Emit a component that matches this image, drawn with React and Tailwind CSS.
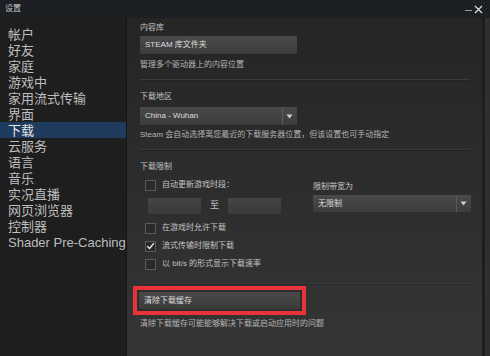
const navItems = [
  "帐户",
  "好友",
  "家庭",
  "游戏中",
  "家用流式传输",
  "界面",
  "下载",
  "云服务",
  "语言",
  "音乐",
  "实况直播",
  "网页浏览器",
  "控制器",
  "Shader Pre-Caching",
];

const font = { fontFamily: '"Liberation Sans", "Noto Sans CJK SC", sans-serif' };

function Checkbox({ checked, label }) {
  return (
    <div className="flex items-center gap-[6px] pl-[5px] h-[18px]">
      <div className="w-[11px] h-[11px] border border-[#5a5a5a] bg-[#2a2a2a] flex items-center justify-center">
        {checked && (
          <svg width="10" height="10" viewBox="0 0 10 10">
            <path d="M1.5 5.2 L4 7.8 L8.8 1.8" stroke="#e8e8e8" strokeWidth="1.6" fill="none" />
          </svg>
        )}
      </div>
      <span className="text-[8px] text-[#c4c4c4]">{label}</span>
    </div>
  );
}

function Arrow() {
  return (
    <div className="flex items-center h-full pl-[3px] border-l border-[#5a5a5a] my-[2px]">
      <svg width="7" height="5" viewBox="0 0 7 5">
        <path d="M0.5 0.5 L6.5 0.5 L3.5 4.5 Z" fill="#cfcfcf" />
      </svg>
    </div>
  );
}

export default function App() {
  return (
    <div className="w-[490px] h-[356px] bg-[#2b2b2b] flex flex-col overflow-hidden" style={font}>
      <div className="h-[18px] shrink-0 bg-[#1c1f23] flex items-center justify-between px-[5px]">
        <span className="text-[8px] text-[#c8c8c8]">设置</span>
        <div className="flex items-center gap-[2px] pr-[2px]">
          <span className="w-[7px] h-[1px] bg-[#9a9a9a] mt-[2px]" />
          <svg width="9" height="9" viewBox="0 0 9 9">
            <path d="M1 1 L8 8 M8 1 L1 8" stroke="#e0e0e0" strokeWidth="1.2" />
          </svg>
        </div>
      </div>
      <div className="flex flex-1 min-h-0">
        <div className="w-[127px] shrink-0 bg-[#1e1e1e] pt-[8px] flex flex-col border-r border-[#151515]">
          {navItems.map((item) => (
            <div
              key={item}
              className={`h-[16px] flex items-center pl-[8px] text-[13px] leading-none whitespace-nowrap ${
                item === "下载" ? "bg-[#1f3c5e] text-[#e6e6e6]" : "text-[#bdbdbd]"
              }`}
            >
              {item}
            </div>
          ))}
        </div>
        <div className="flex-1 min-w-0 bg-gradient-to-b from-[#252525] to-[#353535] pl-[13px] pr-[12px] pt-[3px] flex flex-col">
          <div className="text-[8px] text-[#c4c4c4] h-[13px] flex items-center">内容库</div>
          <div className="w-[157px] h-[18px] mt-[2px] bg-gradient-to-b from-[#4a4a4a] to-[#3c3c3c] flex items-center px-[5px] text-[8px] text-[#dedede]">
            STEAM 库文件夹
          </div>
          <div className="text-[8px] text-[#b4b4b4] mt-[5px]">管理多个驱动器上的内容位置</div>
          <div className="h-[2px] border-t border-[#3b3b3b] mt-[8px] bg-[#222]" />
          <div className="text-[8px] text-[#c4c4c4] mt-[10px]">下载地区</div>
          <div className="w-[157px] h-[18px] mt-[4px] bg-gradient-to-b from-[#4a4a4a] to-[#3c3c3c] flex items-center justify-between pl-[5px] pr-[4px] text-[8px] text-[#dedede]">
            <span>China - Wuhan</span>
            <Arrow />
          </div>
          <div className="text-[8px] text-[#b4b4b4] mt-[4px] whitespace-nowrap">
            Steam 会自动选择离您最近的下载服务器位置，但该设置也可手动指定
          </div>
          <div className="h-[2px] border-t border-[#3b3b3b] mt-[8px] bg-[#222]" />
          <div className="text-[8px] text-[#c4c4c4] mt-[10px]">下载限制</div>
          <div className="flex mt-[3px]">
            <div className="w-[173px] shrink-0 flex flex-col">
              <Checkbox label="自动更新游戏时段：" />
              <div className="flex items-center mt-[4px] pl-[8px]">
                <div className="w-[53px] h-[16px] bg-gradient-to-b from-[#454545] to-[#3a3a3a]" />
                <span className="text-[9px] text-[#c4c4c4] w-[27px] text-center">至</span>
                <div className="w-[53px] h-[16px] bg-gradient-to-b from-[#454545] to-[#3a3a3a]" />
              </div>
            </div>
            <div className="flex flex-col pt-[5px]">
              <div className="text-[8px] text-[#c4c4c4] h-[12px]">限制带宽为</div>
              <div className="w-[158px] h-[17px] mt-[2px] bg-gradient-to-b from-[#4a4a4a] to-[#3c3c3c] flex items-center justify-between pl-[5px] pr-[4px] text-[8px] text-[#dedede]">
                <span>无限制</span>
                <Arrow />
              </div>
            </div>
          </div>
          <div className="flex flex-col mt-[5px]">
            <Checkbox label="在游戏时允许下载" />
            <Checkbox checked label="流式传输时限制下载" />
            <Checkbox label="以 bit/s 的形式显示下载速率" />
          </div>
          <div className="h-[2px] border-t border-[#3b3b3b] mt-[10px] bg-[#262626]" />
          <div className="mt-[1px] -ml-[7px] w-[173px] h-[29px] border-[4px] border-[#e8333a] p-[2px] bg-[#2e2e2e]">
            <div className="h-full bg-gradient-to-b from-[#4a4a4a] to-[#3a3a3a] flex items-center px-[5px] text-[8px] text-[#dedede]">
              清除下载缓存
            </div>
          </div>
          <div className="text-[8px] text-[#b4b4b4] mt-[3px]">清除下载缓存可能能够解决下载或启动应用时的问题</div>
        </div>
        <div className="w-[8px] shrink-0 bg-[#2f2f2f] border-l-[3px] border-[#1e1e1e]" />
      </div>
    </div>
  );
}
